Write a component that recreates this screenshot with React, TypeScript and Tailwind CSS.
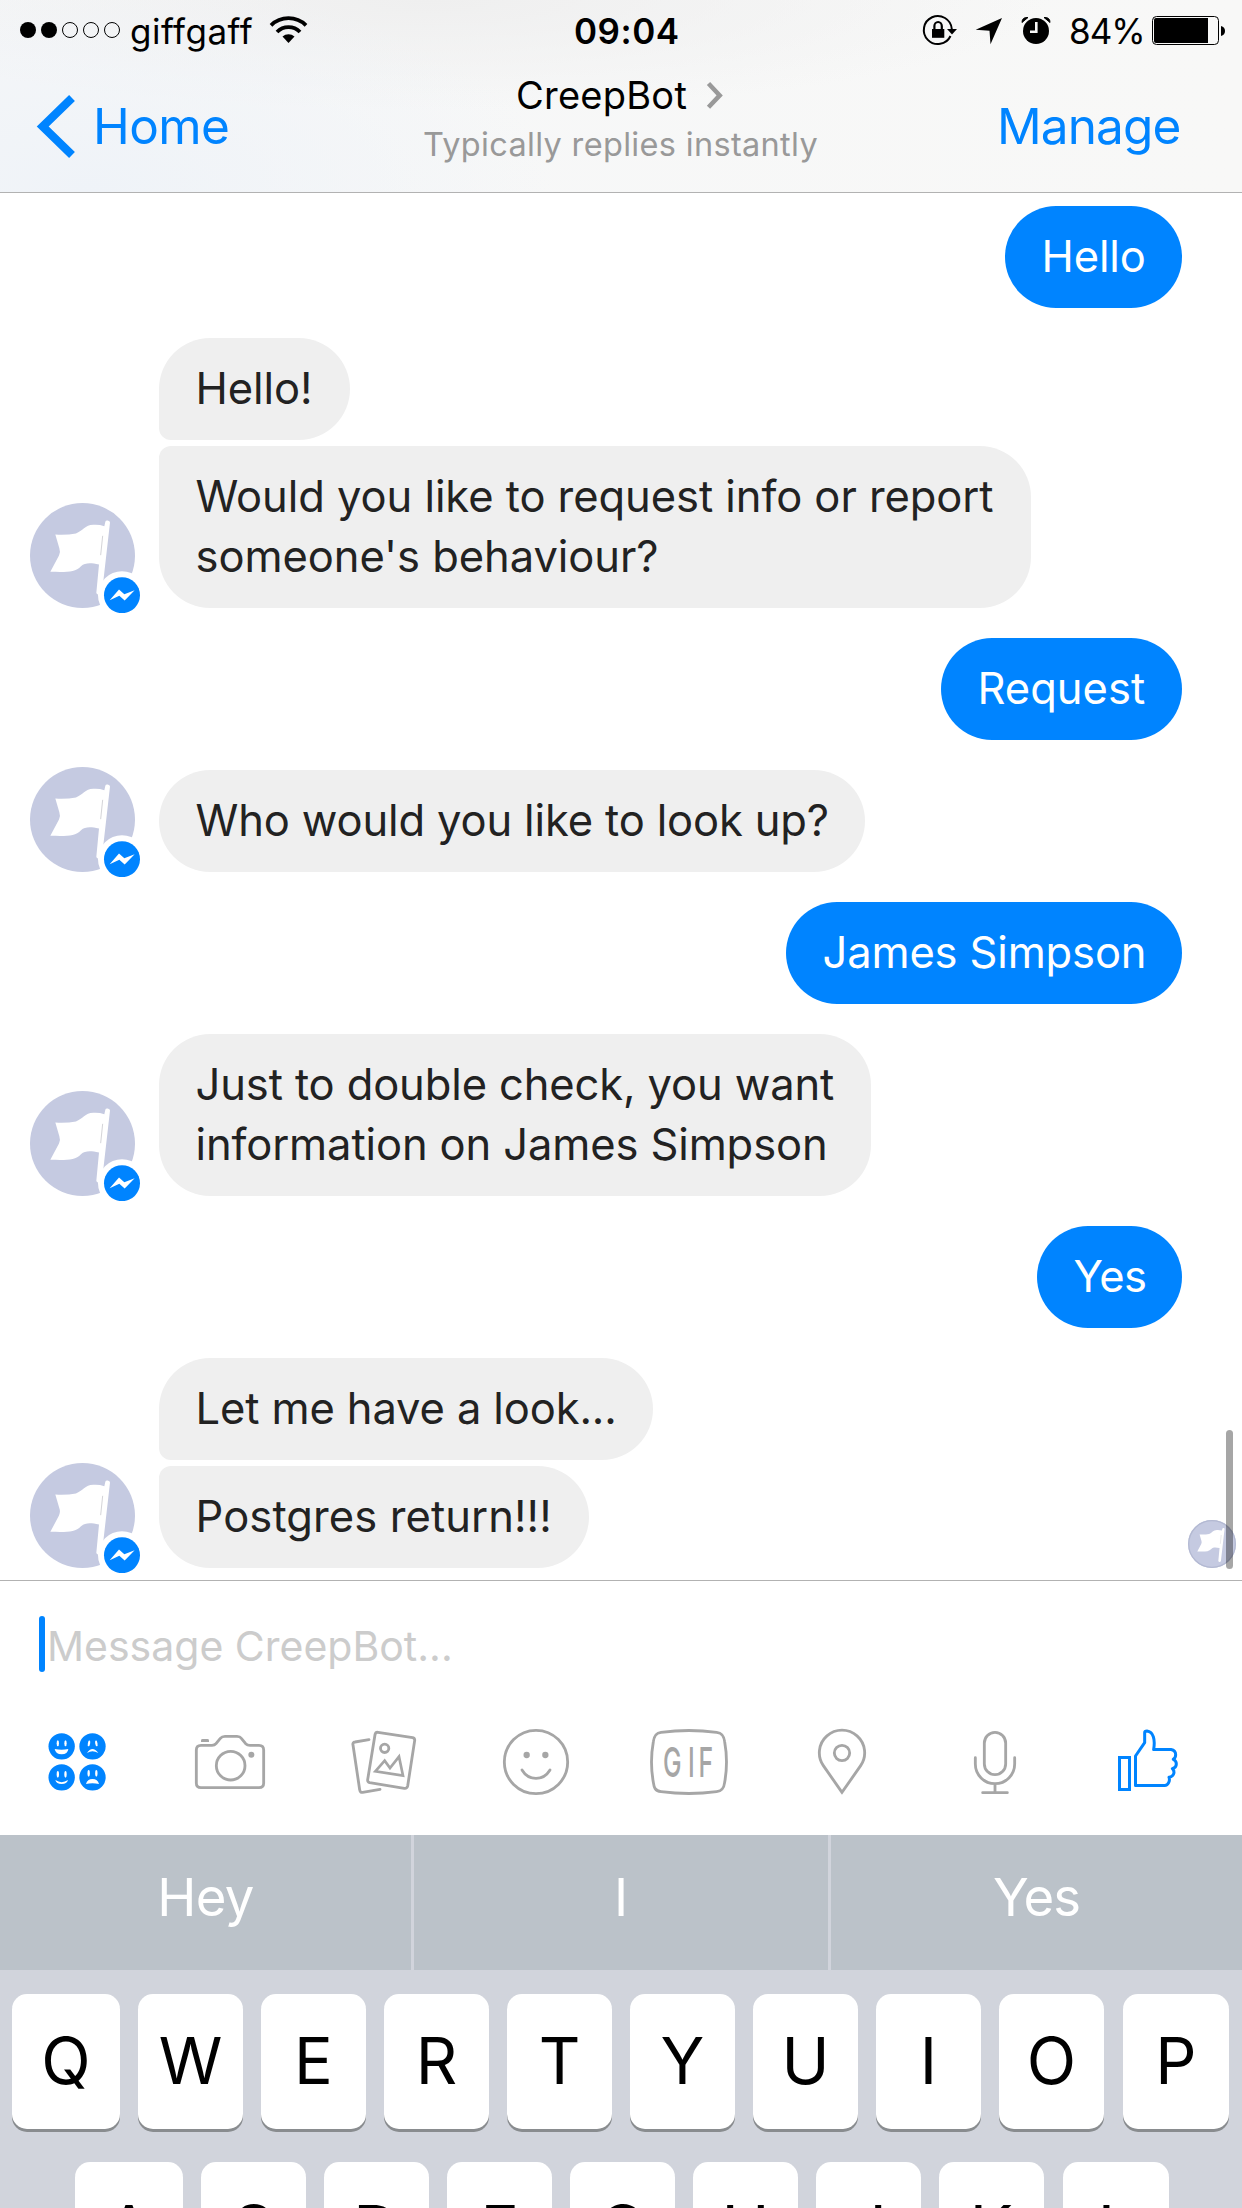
import React from 'react';

type Bubble = { lines: string[]; size: string };
type Group = { from: 'me' | 'bot'; bubbles: Bubble[] };

const groups: Group[] = [
  { from: 'me', bubbles: [{ lines: ['Hello'], size: 'w-[177px] tracking-[-0.15px]' }] },
  {
    from: 'bot',
    bubbles: [
      { lines: ['Hello!'], size: 'w-[191px] tracking-[-0.05px]' },
      { lines: ['Would you like to request info or report', "someone's behaviour?"], size: 'w-[872px] tracking-[-0.06px]' },
    ],
  },
  { from: 'me', bubbles: [{ lines: ['Request'], size: 'w-[241px]' }] },
  { from: 'bot', bubbles: [{ lines: ['Who would you like to look up?'], size: 'w-[706px] tracking-[-0.14px]' }] },
  { from: 'me', bubbles: [{ lines: ['James Simpson'], size: 'w-[396px] tracking-[-0.15px]' }] },
  {
    from: 'bot',
    bubbles: [
      { lines: ['Just to double check, you want', 'information on James Simpson'], size: 'w-[712px] tracking-[-0.12px]' },
    ],
  },
  { from: 'me', bubbles: [{ lines: ['Yes'], size: 'w-[145px] tracking-[-0.5px]' }] },
  {
    from: 'bot',
    bubbles: [
      { lines: ['Let me have a look...'], size: 'w-[494px] tracking-[-0.12px]' },
      { lines: ['Postgres return!!!'], size: 'w-[430px] tracking-[0.1px]' },
    ],
  },
];

function Flag() {
  return (
    <>
      <circle cx="247.5" cy="706" r="157.5" fill="#c5cae1" />
      <path
        d="M166 643Q200 645 228 640C248 633 255 614 280 614Q298 613 313 618L316 605Q317 600 323 601Q330 602 330 607L306 818Q303 825 296 824Q289 823 289 818L297 733C270 727 255 728 243 738C225 757 200 756 151 755L177 706Q182 694 178 684Z"
        fill="#fff"
      />
      <path d="M308 647L302 705" stroke="#d4d4d8" strokeWidth="3" />
    </>
  );
}

function Avatar() {
  return (
    <svg className="-mt-[3px] -mb-[5px] ml-[30px] h-[110px] w-[110px] shrink-0" viewBox="90 548.5 330 330">
      <Flag />
      <circle cx="366" cy="825" r="72" fill="#fff" />
      <circle cx="366" cy="825" r="54" fill="#0084ff" />
      <path d="M329 840L357 808L373 822L404 810L374 841L358 827Z" fill="#fff" />
    </svg>
  );
}

function BotGroup({ bubbles }: { bubbles: Bubble[] }) {
  return (
    <div className="flex items-end gap-[19px]">
      <Avatar />
      <div className="flex flex-col items-start gap-[6px]">
        {bubbles.map((b, i) => (
          <div
            key={i}
            className={`rounded-[51px] bg-[#efefef] pt-[20px] pb-[22px] pl-[36.5px] text-[#222] ${b.size} ${
              i > 0 ? 'rounded-tl-[12px]' : ''
            } ${i < bubbles.length - 1 ? 'rounded-bl-[12px]' : ''}`}
          >
            {b.lines.map((l) => (
              <p key={l} className="whitespace-nowrap">{l}</p>
            ))}
          </div>
        ))}
      </div>
    </div>
  );
}

function StatusBar() {
  return (
    <div className="flex h-[62px] items-center text-[35px] leading-[62px] text-black">
      <div className="flex w-[574px] items-center">
        <svg className="ml-[19px] h-[62px] w-[111px]" viewBox="19 0 111 62">
          <circle cx="28" cy="30" r="8" />
          <circle cx="49" cy="30" r="8" />
          {[70, 91, 112].map((x) => (
            <circle key={x} cx={x} cy="30" r="7.5" fill="none" stroke="#000" />
          ))}
        </svg>
        <span className="w-[138px] tracking-[0.5px]">giffgaff</span>
        <svg className="h-[62px] w-[42px]" viewBox="268 0 42 62" fill="none" stroke="#000" strokeWidth="3.8">
          <path d="M271 25.3A25 25 0 0 1 306 25.3" />
          <path d="M277 32A16 16 0 0 1 300 32" />
          <path d="M282.5 36.5A9 9 0 0 1 294.5 36.5L288.5 43Z" fill="#000" stroke="none" />
        </svg>
      </div>
      <span className="w-[346px] font-semibold tracking-[0.5px]">09:04</span>
      <svg className="h-[62px] w-[149px]" viewBox="920 0 149 62">
        <g>
          <path d="M950.5 36A14 14 0 1 1 951.8 29" fill="none" stroke="#000" strokeWidth="2" />
          <path d="M947 29H957L952 34.5Z" />
          <rect x="932" y="29" width="12.3" height="8.8" />
          <path d="M934.4 30V26A3.7 4 0 0 1 941.8 26V30" fill="none" stroke="#000" strokeWidth="2.2" />
        </g>
        <path d="M975.7 29.7L1002 18L990.5 44.3L989.5 30.8Z" />
        <circle cx="1036" cy="31" r="13" />
        <path d="M1022 22.5Q1022 17 1028 17.5ZM1050 22.5Q1050 17 1044 17.5Z" stroke="#000" />
        <path d="M1036.3 22V31.8H1030" fill="none" stroke="#f7f7f7" strokeWidth="2.6" />
      </svg>
      <span className="w-[83px] tracking-[-1px]">84%</span>
      <svg className="h-[62px] w-[76px]" viewBox="1152 0 76 62">
        <rect x="1152.5" y="16.5" width="66" height="28" rx="4" fill="none" stroke="#000" />
        <path d="M1156 18H1208V43H1156Q1154 43 1154 41V20Q1154 18 1156 18Z" />
        <path d="M1221 26Q1225 27 1225 31T1221 36Z" />
      </svg>
    </div>
  );
}

function Header() {
  return (
    <header className="h-[193px] shrink-0 border-b border-[#b2b2b2] bg-[radial-gradient(ellipse_460px_220px_at_90px_190px,#eff3f8,transparent),radial-gradient(ellipse_620px_110px_at_430px_0px,#efefef,transparent),linear-gradient(to_right,#f6f7f8,#f8f8f7)]">
      <StatusBar />
      <nav className="flex h-[130px] text-[49.5px] leading-[128px] text-[#0084ff]">
        <div className="flex w-[422px]">
          <svg className="ml-[33px] h-[130px] w-[60px]" viewBox="33 62 60 130" fill="none">
            <path d="M72 98L42.7 126.5L72 155" stroke="#0084ff" strokeWidth="8.3" />
          </svg>
          <span className="tracking-[-0.6px]">Home</span>
        </div>
        <div className="flex w-[575px] flex-col">
          <div className="ml-[94px] flex h-[58px] pt-[4px] text-[38px] leading-[58px] tracking-[0.25px] text-black">
            CreepBot
            <svg className="-mt-[4px] ml-[15px] h-[58px] w-[28px]" viewBox="703 62 28 58" fill="none">
              <path d="M709.5 83.5L720.7 95.4L709.5 107.2" stroke="#999" strokeWidth="4.5" />
            </svg>
          </div>
          <div className="ml-[1px] text-[32.5px] leading-[50px] tracking-[0.32px] text-[#999]">Typically replies instantly</div>
        </div>
        <span className="tracking-[-0.9px]">Manage</span>
      </nav>
    </header>
  );
}

function Icon({ box, children }: { box: string; children: React.ReactNode }) {
  return (
    <div className="w-[153px] pl-[32px]">
      <svg
        className="h-[90px] w-[90px]"
        viewBox={box}
        fill="none"
        stroke="#a6a6a6"
        strokeWidth="8.5"
        strokeLinecap="round"
        strokeLinejoin="round"
      >
        {children}
      </svg>
    </div>
  );
}

function Toolbar() {
  return (
    <div className="flex">
      <Icon box="96 471 270 270">
        <g fill="#0084ff" stroke="none">
          <circle cx="185" cy="559" r="39.5" />
          <circle cx="277.500" cy="559" r="39.5" />
          <circle cx="185" cy="652" r="39.5" />
          <circle cx="277.500" cy="652" r="39.5" />
        </g>
        <g fill="#fff" stroke="none">
          <ellipse cx="173.500" cy="550" rx="3.500" ry="9" />
          <ellipse cx="196.500" cy="550" rx="3.500" ry="9" />
          <path d="M164 567Q185 572 205 567Q203 583 185 583T164 567Z" />
          <ellipse cx="267" cy="550" rx="3.500" ry="9" transform="rotate(10 267 550)" />
          <ellipse cx="289" cy="550" rx="3.500" ry="9" transform="rotate(-10 289 550)" />
          <path d="M261 579Q277 555 295 579Q277 569 261 579Z" />
          <ellipse cx="173.500" cy="643" rx="3.500" ry="10" />
          <ellipse cx="196.500" cy="643" rx="3.500" ry="10" />
          <path d="M166 660Q185 673 204 660Q201 672 185 672T166 660Z" />
          <ellipse cx="266" cy="640" rx="3.500" ry="10" />
          <ellipse cx="289" cy="640" rx="3.500" ry="10" />
          <path d="M258 672Q262 657 277.500 657T297 672Q277 667 258 672Z" />
        </g>
      </Icon>
      <Icon box="555 471 270 270">
        <path d="M589 570Q589 556 603 556H636Q644 556 648 551L661 535Q666 529 675 529H711Q720 529 724 535L737 551Q742 556 750 556H777Q791 556 791 570V670Q791 683 777 683H603Q589 683 589 670Z" />
        <circle cx="692" cy="617" r="43" />
        <circle cx="754" cy="584" r="9" fill="#a6a6a6" stroke="none" />
        <path d="M603 546V541Q603 537 608 537H622Q627 537 627 541V546Z" fill="#a6a6a6" stroke="none" />
      </Icon>
      <Icon box="1014 471 270 270">
        <path d="M1107 539L1065 546Q1057 547 1059 555L1079 689Q1080 698 1088 697L1140 688" />
        <path d="M1134 517L1238 533Q1245 535 1244 542L1223 678Q1221 686 1213 685L1109 668Q1102 666 1103 659L1125 524Q1127 516 1134 517Z" />
        <circle cx="1154" cy="565" r="12.500" />
        <path d="M1126 634L1154 602L1170 624L1197 590L1209 647Z" strokeLinejoin="miter" strokeWidth="8" />
      </Icon>
      <Icon box="273 81 270 270">
        <circle cx="408" cy="216" r="95" />
        <circle cx="380" cy="195" r="9.500" fill="#a6a6a6" stroke="none" />
        <circle cx="436" cy="195" r="9.500" fill="#a6a6a6" stroke="none" />
        <path d="M366 240Q381 265 408 265T450 240" />
      </Icon>
      <Icon box="732 81 270 270">
        <path d="M783 127Q867 116 950 127C968 129 972 140 974 155Q985 216 974 277C972 292 968 303 950 305Q867 316 783 305C765 303 762 292 760 277Q749 216 760 155C762 140 766 129 783 127Z" />
        <text
          transform="translate(0 261) scale(0.6 1)"
          x="1315 1440 1492"
          y="0"
          fontSize="124"
          fontWeight="500"
          fill="#a6a6a6"
          stroke="none"
        >
          GIF
        </text>
      </Icon>
      <Icon box="-69 951 270 270">
        <path d="M66 1177L10 1097A68 68 0 1 1 122 1097Z" strokeLinejoin="miter" />
        <circle cx="66" cy="1059" r="23" />
      </Icon>
      <Icon box="390 951 270 270">
        <rect x="493" y="997" width="64" height="127" rx="32" />
        <path d="M466 1073V1092A59 59 0 0 0 584 1092V1073M525 1151V1177M488 1178H562" />
      </Icon>
      <Icon box="849 951 270 270">
        <g stroke="#0084ff" strokeWidth="9" strokeLinecap="butt" strokeLinejoin="miter">
          <rect x="898.500" y="1072.500" width="30" height="96" />
          <path
            d="M946.500 1156.500V1068L974 1028V998Q974 993 981 993C1000 995 1006 1018 1001 1048.500H1053Q1067 1051 1067 1064Q1067 1073 1060 1078Q1069 1082 1069 1092Q1069 1103 1057 1106Q1062 1110 1062 1118Q1060 1129 1047 1132Q1050 1140 1046 1148Q1042 1156.500 1034 1156.500Z"
            strokeLinejoin="round"
          />
        </g>
      </Icon>
    </div>
  );
}

function KeyRow({ letters, className }: { letters: string; className: string }) {
  return (
    <div className={`flex gap-[18px] ${className}`}>
      {letters.split('').map((c, i) => (
        <div
          key={c}
          className={`flex h-[135px] items-center justify-center rounded-[15px] bg-white text-[64.6px] leading-none text-black shadow-[0_3px_0_#898c8f] ${
            i === 0 ? 'w-[108px]' : i === letters.length - 1 ? 'ml-px w-[106px]' : 'w-[105px]'
          }`}
        >
          {c}
        </div>
      ))}
    </div>
  );
}

export default function App() {
  return (
    <div className="flex h-[2208px] w-[1242px] flex-col overflow-hidden bg-white font-['Inter',sans-serif]">
      <Header />
      <main className="relative flex h-[1387px] shrink-0 flex-col gap-[30px] pt-[13px] text-[43.5px] leading-[60px]">
        {groups.map((g, i) =>
          g.from === 'bot' ? (
            <BotGroup key={i} bubbles={g.bubbles} />
          ) : (
            <div
              key={i}
              className={`mr-[60px] self-end rounded-[51px] bg-[#0084ff] pt-[20px] pb-[22px] pl-[36.5px] whitespace-nowrap text-white ${g.bubbles[0].size}`}
            >
              {g.bubbles[0].lines[0]}
            </div>
          ),
        )}
        <svg className="absolute right-[6px] bottom-[12px] h-12 w-12" viewBox="90 548.5 315 315">
          <Flag />
          <circle cx="247.500" cy="706" r="153" fill="none" stroke="#b3b9d2" strokeWidth="8" />
        </svg>
        <div className="absolute right-[9px] bottom-[11px] h-[139px] w-[7px] rounded-full bg-black/35" />
      </main>
      <section className="h-[255px] shrink-0 border-t border-[#b2b2b2]">
        <div className="flex h-[136px] items-center pb-[10px] pl-[39px] text-[41px] leading-[56px] text-[#ccc]">
          <div className="h-[56px] w-[6px] rounded-full bg-[#0084ff]" />
          <span className="ml-[2px] pt-[4px]">Message CreepBot...</span>
        </div>
        <Toolbar />
      </section>
      <section className="h-[373px] shrink-0 bg-[#d1d4dc]">
        <div className="flex h-[135px] gap-[3px] text-center text-[52.7px] leading-[124px] text-white">
          <div className="w-[411px] bg-[#bbc2c9] tracking-[-0.6px]">Hey</div>
          <div className="w-[414px] bg-[#bbc2c9]">I</div>
          <div className="w-[411px] bg-[#bbc2c9] tracking-[-1px]">Yes</div>
        </div>
        <KeyRow letters="QWERTYUIOP" className="mt-[24px] ml-[12px]" />
        <KeyRow letters="ASDFGHJKL" className="mt-[33px] ml-[75px]" />
      </section>
    </div>
  );
}
